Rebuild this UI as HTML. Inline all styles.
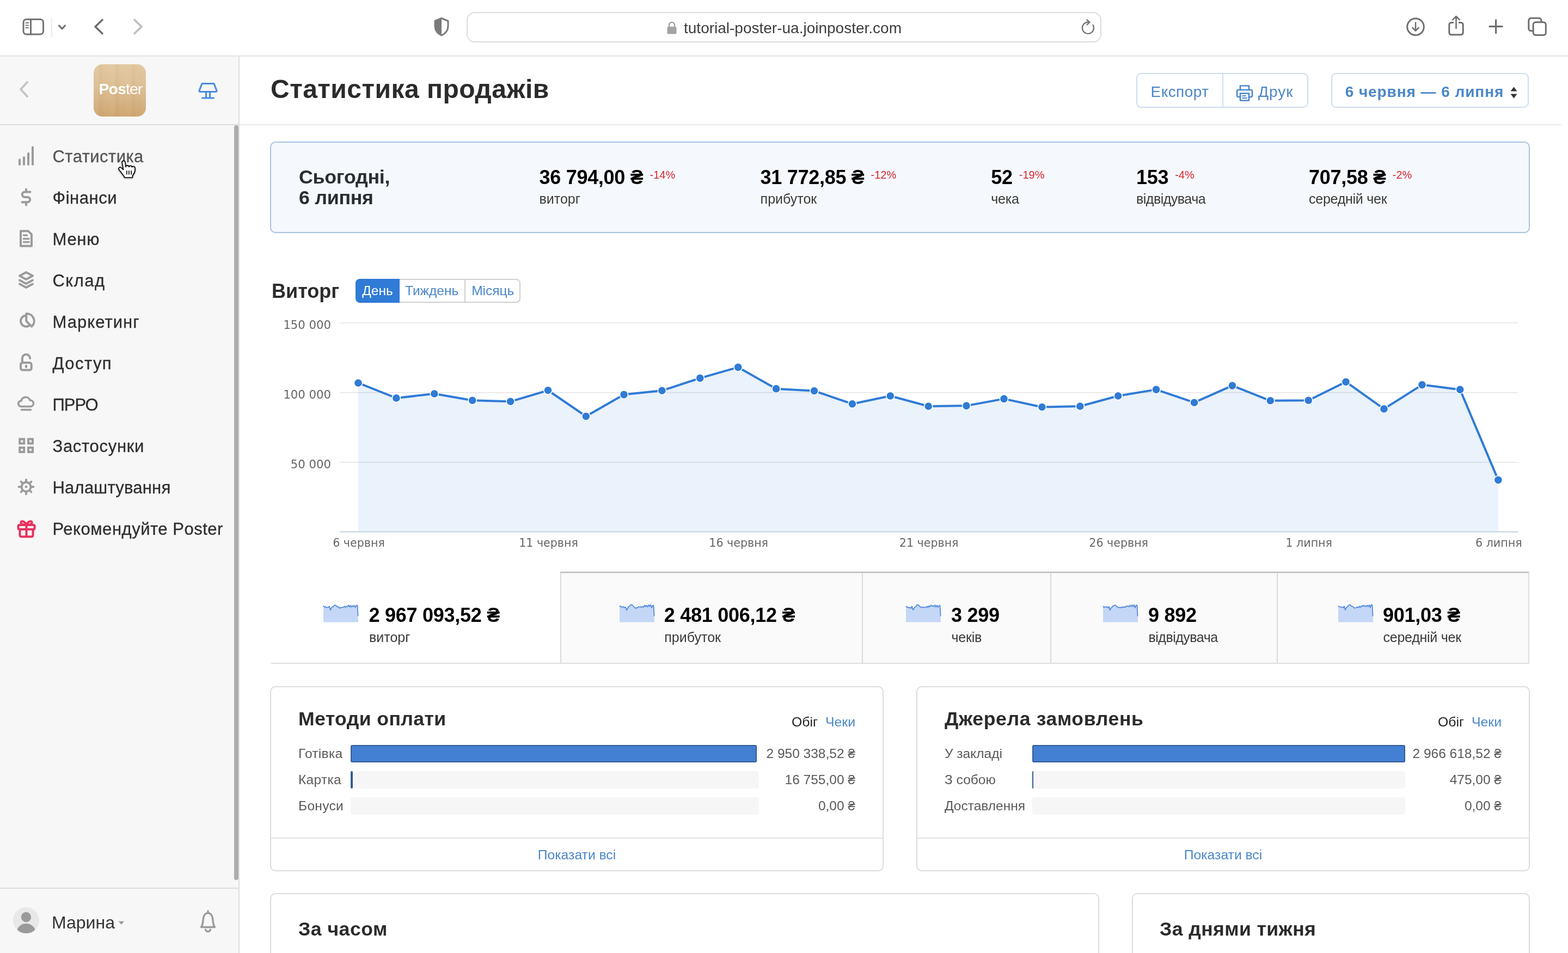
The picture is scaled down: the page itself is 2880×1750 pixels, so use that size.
<!DOCTYPE html>
<html lang="uk"><head><meta charset="utf-8"><title>Статистика продажів</title>
<style>
html,body{margin:0;padding:0;background:#fff;}
body{width:2880px;height:1750px;overflow:hidden;position:relative;font-family:"Liberation Sans",sans-serif;color:#333;}
div,svg{box-sizing:border-box;}
.abs{position:absolute;}
svg{position:absolute;overflow:visible;}
</style></head><body>
<div id="app" style="position:absolute;left:0;top:0;width:2880px;height:1750px;will-change:transform">

<div id="toolbar" class="abs" style="left:0;top:0;width:2880px;height:104px;background:#fff;"><div class="abs" style="left:0;top:102px;width:2880px;height:1px;background:#d7d7d7"></div><div class="abs" style="left:0;top:103px;width:2880px;height:1px;background:#ededed"></div>
<svg style="left:40px;top:32px" width="44" height="34" viewBox="0 0 44 34" fill="none" stroke="#737373" stroke-width="3" stroke-linecap="round">
<rect x="3" y="3.5" width="36.5" height="27.5" rx="5.5"/><line x1="16.5" y1="4" x2="16.5" y2="31"/>
<g stroke-width="2"><line x1="7.5" y1="10" x2="12" y2="10"/><line x1="7.5" y1="14.5" x2="12" y2="14.5"/><line x1="7.5" y1="19" x2="12" y2="19"/></g></svg>
<div class="abs" style="left:94px;top:32px;width:2px;height:36px;background:#ececec"></div>
<svg style="left:104px;top:42px" width="20" height="16" viewBox="0 0 20 16" fill="none" stroke="#737373" stroke-width="3.2" stroke-linecap="round" stroke-linejoin="round"><path d="M4.5 5 L10 10.8 L15.5 5"/></svg>
<svg style="left:168px;top:30px" width="28" height="38" viewBox="0 0 28 38" fill="none" stroke="#6e6e6e" stroke-width="3.6" stroke-linecap="round" stroke-linejoin="round"><path d="M20 6.5 L7 19 L20 31.5"/></svg>
<svg style="left:240px;top:30px" width="28" height="38" viewBox="0 0 28 38" fill="none" stroke="#bdbdbd" stroke-width="3.6" stroke-linecap="round" stroke-linejoin="round"><path d="M7 6.5 L20 19 L7 31.5"/></svg>
<svg style="left:794px;top:30px" width="34" height="38" viewBox="0 0 34 38"><path d="M17 3.5 L29 8.5 V18 C29 26 24 31.5 17 35 C10 31.5 5 26 5 18 V8.5 Z" fill="none" stroke="#7a7a7a" stroke-width="3" stroke-linejoin="round"/><path d="M17 3.5 L5 8.5 V18 C5 26 10 31.5 17 35 Z" fill="#7a7a7a"/></svg>
<div class="abs" style="left:857px;top:22px;width:1166px;height:56px;border:2px solid #dcdcdc;border-radius:15px;background:#fff"></div>
<svg style="left:1224px;top:38px" width="20" height="26" viewBox="0 0 20 26"><rect x="1.5" y="11" width="17" height="13.5" rx="2.5" fill="#a3a3a3"/><path d="M5 12 V8 a5 5 0 0 1 10 0 V12" fill="none" stroke="#a3a3a3" stroke-width="2.4"/></svg>
<div style="position:absolute;top:37.5px;font-size:28px;line-height:28px;font-weight:400;color:#3d3d3d;white-space:nowrap;left:1256px;">tutorial-poster-ua.joinposter.com</div>
<svg style="left:1984px;top:34px" width="30" height="32" viewBox="0 0 30 32" fill="none" stroke="#737373" stroke-width="2.4" stroke-linecap="round" stroke-linejoin="round"><path d="M23.5 12 A10.5 10.5 0 1 1 14 6.8"/><path d="M12.5 2.5 L17.5 6.8 L12.5 11.5"/></svg>
<svg style="left:2581px;top:30px" width="38" height="38" viewBox="0 0 38 38" fill="none" stroke="#6e6e6e" stroke-width="3" stroke-linecap="round" stroke-linejoin="round"><circle cx="19" cy="19.3" r="15.3"/><path d="M19 11.500 V26.300 M13.300 20.800 L19 26.500 L24.700 20.800" stroke-width="2.5"/></svg>
<svg style="left:2656px;top:26px" width="38" height="42" viewBox="0 0 38 42" fill="none" stroke="#6e6e6e" stroke-width="3" stroke-linecap="round" stroke-linejoin="round"><path d="M12.800 15.400 H9.500 a3.700 3.700 0 0 0 -3.700 3.700 V34 a3.700 3.700 0 0 0 3.700 3.700 H27.500 a3.700 3.700 0 0 0 3.700 -3.700 V19.100 a3.700 3.700 0 0 0 -3.700 -3.700 H24.200"/><path d="M18.500 26 V4.500 M12.200 10.300 L18.500 4 L24.800 10.300" stroke-width="2.5"/></svg>
<svg style="left:2732px;top:33px" width="32" height="32" viewBox="0 0 32 32" fill="none" stroke="#6e6e6e" stroke-width="3.2" stroke-linecap="round"><path d="M15.600 3.800 V27.600 M3.900 15.600 H27.300"/></svg>
<svg style="left:2804px;top:30px" width="40" height="38" viewBox="0 0 40 38" fill="none" stroke="#6e6e6e" stroke-width="3" stroke-linejoin="round"><path d="M12 26.800 H8.300 a4.500 4.500 0 0 1 -4.500 -4.500 V7.800 a4.500 4.500 0 0 1 4.500 -4.500 H22.500 a4.500 4.500 0 0 1 4.500 4.500 V10.800"/><rect x="12.100" y="10.800" width="23.200" height="23.600" rx="4.500"/></svg>
</div>
<div id="sidebar" class="abs" style="left:0;top:104px;width:440px;height:1646px;background:#f7f7f7;border-right:2px solid #dedede;">
</div>
<div class="abs" style="left:0;top:228px;width:438px;height:2px;background:#dedede"></div>
<svg style="left:30px;top:146px" width="28" height="36" viewBox="0 0 28 36" fill="none" stroke="#c4c4c4" stroke-width="4" stroke-linecap="round" stroke-linejoin="round"><path d="M20 5 L8 18 L20 31"/></svg>
<div class="abs" style="left:172px;top:118px;width:96px;height:96px;border-radius:16px;background:linear-gradient(180deg,#e2c8a0 0%,#dcbd92 45%,#cfa570 100%);overflow:hidden">
<div class="abs" style="left:0;top:0;width:96px;height:96px;background:repeating-linear-gradient(90deg,rgba(255,255,255,0.035) 0 9px,rgba(150,100,40,0.03) 9px 17px,rgba(255,255,255,0.015) 17px 30px)"></div>
<div class="abs" style="left:9.5px;top:27px;font-size:28.5px;line-height:36px;color:#fff;letter-spacing:-0.95px;white-space:nowrap"><b>Pos</b>ter</div></div>
<svg style="left:362px;top:150px" width="40" height="34" viewBox="0 0 40 34" fill="none" stroke="#4a8de0" stroke-width="3.2" stroke-linecap="round" stroke-linejoin="round"><path d="M9 3.5 H31 L36 16.5 a2 2 0 0 1 -2 2 H6 a2 2 0 0 1 -2 -2 Z"/><path d="M16.5 19 V29.5 M23.5 19 V29.5 M9.5 30 H30.5"/></svg>
<div class="abs" style="left:430px;top:230px;width:8px;height:1386px;border-radius:4px;background:#adadad"></div>
<div style="position:absolute;top:272.3px;font-size:31px;line-height:31px;font-weight:400;color:#555;white-space:nowrap;letter-spacing:0.45px;left:96.5px;-webkit-text-stroke:0.3px #555;">Статистика</div>
<div style="position:absolute;top:348.3px;font-size:31px;line-height:31px;font-weight:400;color:#2e2e2e;white-space:nowrap;letter-spacing:0.56px;left:96.5px;-webkit-text-stroke:0.3px #2e2e2e;">Фінанси</div>
<div style="position:absolute;top:424.3px;font-size:31px;line-height:31px;font-weight:400;color:#2e2e2e;white-space:nowrap;letter-spacing:0.73px;left:96.5px;-webkit-text-stroke:0.3px #2e2e2e;">Меню</div>
<div style="position:absolute;top:500.3px;font-size:31px;line-height:31px;font-weight:400;color:#2e2e2e;white-space:nowrap;letter-spacing:1.47px;left:96.5px;-webkit-text-stroke:0.3px #2e2e2e;">Склад</div>
<div style="position:absolute;top:576.3px;font-size:31px;line-height:31px;font-weight:400;color:#2e2e2e;white-space:nowrap;letter-spacing:1.04px;left:96.5px;-webkit-text-stroke:0.3px #2e2e2e;">Маркетинг</div>
<div style="position:absolute;top:652.3px;font-size:31px;line-height:31px;font-weight:400;color:#2e2e2e;white-space:nowrap;letter-spacing:1.44px;left:96.5px;-webkit-text-stroke:0.3px #2e2e2e;">Доступ</div>
<div style="position:absolute;top:728.3px;font-size:31px;line-height:31px;font-weight:400;color:#2e2e2e;white-space:nowrap;letter-spacing:-0.96px;left:96.5px;-webkit-text-stroke:0.3px #2e2e2e;">ПРРО</div>
<div style="position:absolute;top:804.3px;font-size:31px;line-height:31px;font-weight:400;color:#2e2e2e;white-space:nowrap;letter-spacing:0.7px;left:96.5px;-webkit-text-stroke:0.3px #2e2e2e;">Застосунки</div>
<div style="position:absolute;top:880.3px;font-size:31px;line-height:31px;font-weight:400;color:#2e2e2e;white-space:nowrap;letter-spacing:0.22px;left:96.5px;-webkit-text-stroke:0.3px #2e2e2e;">Налаштування</div>
<div style="position:absolute;top:956.3px;font-size:31px;line-height:31px;font-weight:400;color:#2e2e2e;white-space:nowrap;letter-spacing:0.52px;left:96.5px;-webkit-text-stroke:0.3px #2e2e2e;">Рекомендуйте Poster</div>
<svg style="left:30px;top:264px" width="36" height="44" viewBox="0 0 36 44" fill="#9b9b9b"><rect x="4" y="27.5" width="4" height="12.3" rx="1.5"/><rect x="12" y="23.3" width="4" height="16.5" rx="1.5"/><rect x="20" y="16" width="4" height="23.8" rx="1.5"/><rect x="28" y="4.5" width="4" height="35.3" rx="1.5"/></svg>
<svg style="left:34px;top:342px" width="28" height="40" viewBox="0 0 28 40" fill="none" stroke="#9b9b9b" stroke-width="4" stroke-linecap="round" stroke-linejoin="round"><path d="M21.5 10.5 H11.5 a4.7 4.7 0 0 0 0 9.4 H16.5 a4.7 4.7 0 0 1 0 9.4 H6.5"/><path d="M14 5.5 V9 M14 31 V34.5"/></svg>
<svg style="left:32px;top:418px" width="32" height="40" viewBox="0 0 32 40" fill="none" stroke="#9b9b9b" stroke-width="4" stroke-linejoin="round" stroke-linecap="round"><path d="M6 6.3 H20 L26 12.3 V33.8 H6 Z"/><path d="M11.5 14 H17.5 M11.5 20.5 H21 M11.5 26.5 H21" stroke-width="3.6"/></svg>
<svg style="left:30px;top:494px" width="36" height="40" viewBox="0 0 36 40" fill="none" stroke="#9b9b9b" stroke-width="4" stroke-linejoin="round" stroke-linecap="round"><path d="M18 6 L30 12.5 L18 19 L6 12.5 Z"/><path d="M6 20.5 L18 27 L30 20.5"/><path d="M6 27.5 L18 34 L30 27.5"/></svg>
<svg style="left:32px;top:570px" width="36" height="36" viewBox="0 0 36 36" fill="none" stroke="#9b9b9b" stroke-width="4" stroke-linejoin="round" stroke-linecap="round"><path d="M16 9.600 A10 10 0 1 0 22.800 27"/><path d="M16.300 19.600 V6 A13.600 13.600 0 0 1 26.300 29.600 Z"/></svg>
<svg style="left:32px;top:644px" width="32" height="40" viewBox="0 0 32 40" fill="none" stroke="#9b9b9b" stroke-width="4" stroke-linejoin="round" stroke-linecap="round"><rect x="6" y="22" width="19.7" height="13.5" rx="3.5"/><path d="M8.8 22 V14 a7.2 7.2 0 0 1 14.4 0"/><path d="M16 28 V29.5" stroke-width="4.4"/></svg>
<svg style="left:28px;top:724px" width="40" height="34" viewBox="0 0 40 34" fill="none" stroke="#9b9b9b" stroke-width="3.6" stroke-linejoin="round" stroke-linecap="round"><path d="M11 22.5 a5.2 5.2 0 0 1 0 -10.4 a8.3 8.3 0 0 1 16 -1.2 a5.9 5.9 0 0 1 2 11.6 Z"/><path d="M11.5 28.5 H28.5"/></svg>
<svg style="left:30px;top:800px" width="36" height="36" viewBox="0 0 36 36" fill="none" stroke="#9b9b9b" stroke-width="4"><rect x="6.2" y="6.3" width="8" height="8"/><rect x="22" y="6.3" width="8" height="8"/><rect x="6.2" y="22" width="8" height="8"/><rect x="22" y="22" width="8" height="8"/></svg>
<svg style="left:28px;top:874px" width="40" height="40" viewBox="0 0 40 40" fill="none" stroke="#9b9b9b" stroke-width="3.8" stroke-linecap="round"><circle cx="20" cy="20" r="8.5"/><line x1="20.00" y1="30.00" x2="20.00" y2="33.40"/><line x1="12.93" y1="27.07" x2="10.52" y2="29.48"/><line x1="10.00" y1="20.00" x2="6.60" y2="20.00"/><line x1="12.93" y1="12.93" x2="10.52" y2="10.52"/><line x1="20.00" y1="10.00" x2="20.00" y2="6.60"/><line x1="27.07" y1="12.93" x2="29.48" y2="10.52"/><line x1="30.00" y1="20.00" x2="33.40" y2="20.00"/><line x1="27.07" y1="27.07" x2="29.48" y2="29.48"/><circle cx="20" cy="20" r="1.6" fill="#9b9b9b" stroke-width="1.5"/></svg>
<svg style="left:28px;top:950px" width="42" height="42" viewBox="0 0 42 42" fill="none" stroke="#e8325f" stroke-width="4" stroke-linejoin="round" stroke-linecap="round"><rect x="5.6" y="14" width="30" height="8" rx="2"/><path d="M8.5 22 V33 a2.5 2.5 0 0 0 2.5 2.5 H30 a2.5 2.5 0 0 0 2.5 -2.5 V22"/><path d="M20.5 14 V35.5"/><path d="M20.5 13.5 C16 5 8 6 11 11.5 C12 13 15 13.5 20.5 13.5 C26 13.5 29 13 30 11.5 C33 6 25 5 20.5 13.5 Z"/></svg>
<div class="abs" style="left:0;top:1630px;width:438px;height:2px;background:#dcdcdc"></div>
<svg style="left:24px;top:1666px" width="48" height="48" viewBox="0 0 48 48"><defs><clipPath id="av"><circle cx="24" cy="24" r="24"/></clipPath></defs><circle cx="24" cy="24" r="24" fill="#e8e8e8"/><g clip-path="url(#av)" fill="#9a9a9a"><circle cx="24" cy="18" r="9.2"/><ellipse cx="24" cy="45" rx="17" ry="15"/></g></svg>
<div style="position:absolute;top:1677.8px;font-size:32px;line-height:32px;font-weight:400;color:#333;white-space:nowrap;left:95px;">Марина</div>
<svg style="left:217px;top:1691px" width="12" height="8" viewBox="0 0 12 8"><path d="M0.5 0.8 H11 L5.8 6.8 Z" fill="#9a9a9a"/></svg>
<svg style="left:364px;top:1668px" width="36" height="46" viewBox="0 0 36 46" fill="none" stroke="#9a9a9a" stroke-width="3.4" stroke-linecap="round" stroke-linejoin="round"><path d="M18 5 V8"/><path d="M5.5 34.5 C9 30 8.5 24 9.5 18 C10.5 12 14 8.5 18 8.5 C22 8.5 25.5 12 26.5 18 C27.5 24 27 30 30.5 34.5 Z"/><path d="M13.5 39 a4.6 4.6 0 0 0 9 0"/></svg>
<div id="main" class="abs" style="left:440px;top:104px;width:2440px;height:1646px;background:#fff"></div>
<div class="abs" style="left:440px;top:228px;width:2428px;height:2px;background:#ececec"></div>
<div style="position:absolute;top:140.4px;font-size:48px;line-height:48px;font-weight:700;color:#2b2b2b;white-space:nowrap;letter-spacing:0.48px;left:497px;">Статистика продажів</div>
<div class="abs" style="left:2087px;top:134px;width:316px;height:64px;border:2px solid #cddcf0;border-radius:9px;background:#fff"></div>
<div class="abs" style="left:2245px;top:135px;width:2px;height:62px;background:#cddcf0"></div>
<div style="position:absolute;top:155.3px;font-size:28px;line-height:28px;font-weight:400;color:#4a86c9;white-space:nowrap;letter-spacing:0.45px;left:2113.5px;">Експорт</div>
<svg style="left:2269px;top:154px" width="34" height="34" viewBox="0 0 34 34" fill="none" stroke="#4a86c9" stroke-width="2.6" stroke-linejoin="round" stroke-linecap="round"><path d="M9 11 V3.5 H25 V11"/><path d="M9 24 H5.5 a2.5 2.5 0 0 1 -2.500 -2.5 V13.500 a2.5 2.5 0 0 1 2.500 -2.5 H28.500 a2.5 2.5 0 0 1 2.500 2.5 V21.500 a2.5 2.5 0 0 1 -2.500 2.5 H25"/><rect x="9" y="17.500" width="16" height="13"/><path d="M13 22 H19 M13 26 H21" stroke-width="2"/></svg>
<div style="position:absolute;top:155.3px;font-size:28px;line-height:28px;font-weight:400;color:#4a86c9;white-space:nowrap;letter-spacing:1.0px;left:2311px;">Друк</div>
<div class="abs" style="left:2445px;top:134px;width:363px;height:64px;border:2px solid #cddcf0;border-radius:9px;background:#fff"></div>
<div style="position:absolute;top:155.3px;font-size:28px;line-height:28px;font-weight:700;color:#4a86c9;white-space:nowrap;letter-spacing:0.93px;left:2470.7px;">6 червня — 6 липня</div>
<svg style="left:2773px;top:158px" width="16" height="24" viewBox="0 0 16 24" fill="#333"><path d="M7.500 1.500 L13.500 9.500 H1.500 Z"/><path d="M7.500 22.500 L13.500 14.500 H1.500 Z"/></svg>
<div id="today" class="abs" style="left:496px;top:260px;width:2314px;height:168px;border:2px solid #a8c2e4;border-radius:10px;background:#f5f8fd"></div>
<div style="position:absolute;top:307.8px;font-size:35.8px;line-height:35.8px;font-weight:700;color:#2a2d33;white-space:nowrap;letter-spacing:-0.3px;left:549px;">Сьогодні,</div>
<div style="position:absolute;top:346.4px;font-size:35.8px;line-height:35.8px;font-weight:700;color:#2a2d33;white-space:nowrap;letter-spacing:-0.3px;left:549px;">6 липня</div>
<div style="position:absolute;top:308.0px;font-size:36px;line-height:36px;font-weight:700;color:#000;white-space:nowrap;letter-spacing:-0.29px;left:990.5px;">36 794,00 ₴<span style="font-weight:400;font-size:20px;color:#d9262c;position:relative;top:-10px;margin-left:12px;letter-spacing:0">-14%</span></div>
<div style="position:absolute;top:352.8px;font-size:25px;line-height:25px;font-weight:400;color:#3a3a3a;white-space:nowrap;left:990.5px;">виторг</div>
<div style="position:absolute;top:308.0px;font-size:36px;line-height:36px;font-weight:700;color:#000;white-space:nowrap;letter-spacing:-0.29px;left:1396.6px;">31 772,85 ₴<span style="font-weight:400;font-size:20px;color:#d9262c;position:relative;top:-10px;margin-left:12px;letter-spacing:0">-12%</span></div>
<div style="position:absolute;top:352.8px;font-size:25px;line-height:25px;font-weight:400;color:#3a3a3a;white-space:nowrap;left:1396.6px;">прибуток</div>
<div style="position:absolute;top:308.0px;font-size:36px;line-height:36px;font-weight:700;color:#000;white-space:nowrap;letter-spacing:-0.29px;left:1820.3px;">52<span style="font-weight:400;font-size:20px;color:#d9262c;position:relative;top:-10px;margin-left:12px;letter-spacing:0">-19%</span></div>
<div style="position:absolute;top:352.8px;font-size:25px;line-height:25px;font-weight:400;color:#3a3a3a;white-space:nowrap;letter-spacing:-0.2px;left:1820.3px;">чека</div>
<div style="position:absolute;top:308.0px;font-size:36px;line-height:36px;font-weight:700;color:#000;white-space:nowrap;letter-spacing:-0.29px;left:2087px;">153<span style="font-weight:400;font-size:20px;color:#d9262c;position:relative;top:-10px;margin-left:12px;letter-spacing:0">-4%</span></div>
<div style="position:absolute;top:352.8px;font-size:25px;line-height:25px;font-weight:400;color:#3a3a3a;white-space:nowrap;letter-spacing:-0.5px;left:2087px;">відвідувача</div>
<div style="position:absolute;top:308.0px;font-size:36px;line-height:36px;font-weight:700;color:#000;white-space:nowrap;letter-spacing:-0.29px;left:2404px;">707,58 ₴<span style="font-weight:400;font-size:20px;color:#d9262c;position:relative;top:-10px;margin-left:12px;letter-spacing:0">-2%</span></div>
<div style="position:absolute;top:352.8px;font-size:25px;line-height:25px;font-weight:400;color:#3a3a3a;white-space:nowrap;letter-spacing:-0.25px;left:2404px;">середній чек</div>
<div style="position:absolute;top:516.8px;font-size:36px;line-height:36px;font-weight:700;color:#2b2b2b;white-space:nowrap;left:499px;">Виторг</div>
<div class="abs" style="left:653px;top:512px;width:303px;height:44px;border:2px solid #d0d0d0;border-radius:8px;background:#fff"></div>
<div class="abs" style="left:653px;top:512px;width:81px;height:44px;border-radius:8px 0 0 8px;background:#2f7bd6"></div>
<div class="abs" style="left:853px;top:514px;width:2px;height:40px;background:#d0d0d0"></div>
<div style="position:absolute;top:522.2px;font-size:24.5px;line-height:24.5px;font-weight:400;color:#fff;white-space:nowrap;left:665.2px;">День</div>
<div style="position:absolute;top:522.2px;font-size:24.5px;line-height:24.5px;font-weight:400;color:#4a86c9;white-space:nowrap;left:744px;">Тиждень</div>
<div style="position:absolute;top:522.2px;font-size:24.5px;line-height:24.5px;font-weight:400;color:#4a86c9;white-space:nowrap;left:866.2px;">Місяць</div>
<svg id="chart" style="left:480px;top:560px" width="2360" height="470" viewBox="0 0 2360 470"><rect x="144" y="31.8" width="2164" height="2" fill="#e9e9e9"/><rect x="144" y="159.9" width="2164" height="2" fill="#e9e9e9"/><rect x="144" y="287.9" width="2164" height="2" fill="#e9e9e9"/><path d="M178.0,143.2 L247.9,171.0 L317.8,163.0 L387.7,175.3 L457.6,177.3 L526.5,156.8 L596.3,204.5 L666.0,164.6 L735.9,157.3 L805.8,134.4 L875.7,114.4 L945.6,153.9 L1015.5,157.8 L1085.4,181.7 L1155.3,167.0 L1225.2,186.0 L1295.0,185.1 L1364.0,172.4 L1433.9,187.5 L1503.8,186.0 L1573.7,167.0 L1643.6,155.4 L1713.5,179.2 L1783.4,148.1 L1853.3,175.8 L1923.2,175.3 L1992.0,141.2 L2062.0,190.9 L2132.0,146.6 L2201.7,155.4 L2271.8,321.4 L2271.8,416.6 L178.0,416.6 Z" fill="#2f7bd6" fill-opacity="0.1"/><rect x="144" y="415.6" width="2164" height="2" fill="#c2d2e6"/><path d="M178.0,143.2 L247.9,171.0 L317.8,163.0 L387.7,175.3 L457.6,177.3 L526.5,156.8 L596.3,204.5 L666.0,164.6 L735.9,157.3 L805.8,134.4 L875.7,114.4 L945.6,153.9 L1015.5,157.8 L1085.4,181.7 L1155.3,167.0 L1225.2,186.0 L1295.0,185.1 L1364.0,172.4 L1433.9,187.5 L1503.8,186.0 L1573.7,167.0 L1643.6,155.4 L1713.5,179.2 L1783.4,148.1 L1853.3,175.8 L1923.2,175.3 L1992.0,141.2 L2062.0,190.9 L2132.0,146.6 L2201.7,155.4 L2271.8,321.4" fill="none" stroke="#2f7bd6" stroke-width="4" stroke-linejoin="round" stroke-linecap="round"/><circle cx="178.0" cy="143.2" r="7.6" fill="#2f7bd6" stroke="#fff" stroke-width="1.6"/><circle cx="247.9" cy="171.0" r="7.6" fill="#2f7bd6" stroke="#fff" stroke-width="1.6"/><circle cx="317.8" cy="163.0" r="7.6" fill="#2f7bd6" stroke="#fff" stroke-width="1.6"/><circle cx="387.7" cy="175.3" r="7.6" fill="#2f7bd6" stroke="#fff" stroke-width="1.6"/><circle cx="457.6" cy="177.3" r="7.6" fill="#2f7bd6" stroke="#fff" stroke-width="1.6"/><circle cx="526.5" cy="156.8" r="7.6" fill="#2f7bd6" stroke="#fff" stroke-width="1.6"/><circle cx="596.3" cy="204.5" r="7.6" fill="#2f7bd6" stroke="#fff" stroke-width="1.6"/><circle cx="666.0" cy="164.6" r="7.6" fill="#2f7bd6" stroke="#fff" stroke-width="1.6"/><circle cx="735.9" cy="157.3" r="7.6" fill="#2f7bd6" stroke="#fff" stroke-width="1.6"/><circle cx="805.8" cy="134.4" r="7.6" fill="#2f7bd6" stroke="#fff" stroke-width="1.6"/><circle cx="875.7" cy="114.4" r="7.6" fill="#2f7bd6" stroke="#fff" stroke-width="1.6"/><circle cx="945.6" cy="153.9" r="7.6" fill="#2f7bd6" stroke="#fff" stroke-width="1.6"/><circle cx="1015.5" cy="157.8" r="7.6" fill="#2f7bd6" stroke="#fff" stroke-width="1.6"/><circle cx="1085.4" cy="181.7" r="7.6" fill="#2f7bd6" stroke="#fff" stroke-width="1.6"/><circle cx="1155.3" cy="167.0" r="7.6" fill="#2f7bd6" stroke="#fff" stroke-width="1.6"/><circle cx="1225.2" cy="186.0" r="7.6" fill="#2f7bd6" stroke="#fff" stroke-width="1.6"/><circle cx="1295.0" cy="185.1" r="7.6" fill="#2f7bd6" stroke="#fff" stroke-width="1.6"/><circle cx="1364.0" cy="172.4" r="7.6" fill="#2f7bd6" stroke="#fff" stroke-width="1.6"/><circle cx="1433.9" cy="187.5" r="7.6" fill="#2f7bd6" stroke="#fff" stroke-width="1.6"/><circle cx="1503.8" cy="186.0" r="7.6" fill="#2f7bd6" stroke="#fff" stroke-width="1.6"/><circle cx="1573.7" cy="167.0" r="7.6" fill="#2f7bd6" stroke="#fff" stroke-width="1.6"/><circle cx="1643.6" cy="155.4" r="7.6" fill="#2f7bd6" stroke="#fff" stroke-width="1.6"/><circle cx="1713.5" cy="179.2" r="7.6" fill="#2f7bd6" stroke="#fff" stroke-width="1.6"/><circle cx="1783.4" cy="148.1" r="7.6" fill="#2f7bd6" stroke="#fff" stroke-width="1.6"/><circle cx="1853.3" cy="175.8" r="7.6" fill="#2f7bd6" stroke="#fff" stroke-width="1.6"/><circle cx="1923.2" cy="175.3" r="7.6" fill="#2f7bd6" stroke="#fff" stroke-width="1.6"/><circle cx="1992.0" cy="141.2" r="7.6" fill="#2f7bd6" stroke="#fff" stroke-width="1.6"/><circle cx="2062.0" cy="190.9" r="7.6" fill="#2f7bd6" stroke="#fff" stroke-width="1.6"/><circle cx="2132.0" cy="146.6" r="7.6" fill="#2f7bd6" stroke="#fff" stroke-width="1.6"/><circle cx="2201.7" cy="155.4" r="7.6" fill="#2f7bd6" stroke="#fff" stroke-width="1.6"/><circle cx="2271.8" cy="321.4" r="7.6" fill="#2f7bd6" stroke="#fff" stroke-width="1.6"/><text x="128.0" y="44.1" text-anchor="end" font-family="DejaVu Sans, sans-serif" font-size="21.2" fill="#666">150 000</text><text x="128.0" y="172.2" text-anchor="end" font-family="DejaVu Sans, sans-serif" font-size="21.2" fill="#666">100 000</text><text x="128.0" y="300.2" text-anchor="end" font-family="DejaVu Sans, sans-serif" font-size="21.2" fill="#666">50 000</text><text x="179.0" y="443.7" text-anchor="middle" font-family="DejaVu Sans, sans-serif" font-size="20.6" fill="#666">6 червня</text><text x="527.5" y="443.7" text-anchor="middle" font-family="DejaVu Sans, sans-serif" font-size="20.6" fill="#666">11 червня</text><text x="876.7" y="443.7" text-anchor="middle" font-family="DejaVu Sans, sans-serif" font-size="20.6" fill="#666">16 червня</text><text x="1226.2" y="443.7" text-anchor="middle" font-family="DejaVu Sans, sans-serif" font-size="20.6" fill="#666">21 червня</text><text x="1574.7" y="443.7" text-anchor="middle" font-family="DejaVu Sans, sans-serif" font-size="20.6" fill="#666">26 червня</text><text x="1924.2" y="443.7" text-anchor="middle" font-family="DejaVu Sans, sans-serif" font-size="20.6" fill="#666">1 липня</text><text x="2272.8" y="443.7" text-anchor="middle" font-family="DejaVu Sans, sans-serif" font-size="20.6" fill="#666">6 липня</text></svg>
<div class="abs" style="left:1029px;top:1050px;width:1780px;height:169px;background:#fafafa;border-top:1px solid #9c9c9c;border-bottom:2px solid #dedede;border-right:2px solid #dedede;box-shadow:inset 0 2px 2px -1px rgba(0,0,0,0.22)"></div>
<div class="abs" style="left:497px;top:1217px;width:534px;height:2px;background:#dedede;border-radius:0 0 0 6px"></div>
<div class="abs" style="left:1029px;top:1052px;width:2px;height:166px;background:#d9d9d9"></div>
<div class="abs" style="left:1583px;top:1052px;width:2px;height:166px;background:#d9d9d9"></div>
<div class="abs" style="left:1929px;top:1052px;width:2px;height:166px;background:#d9d9d9"></div>
<div class="abs" style="left:2345px;top:1052px;width:2px;height:166px;background:#d9d9d9"></div>
<svg style="left:594px;top:1108.5px" width="64" height="34" viewBox="0 0 64 34"><path d="M0.0,3.0 L1.8,5.9 L3.7,5.0 L5.5,6.7 L7.4,6.2 L9.2,6.4 L11.0,4.1 L12.9,11.6 L14.7,7.1 L16.5,5.0 L18.4,4.9 L20.2,2.1 L22.1,2.4 L23.9,3.5 L25.7,5.3 L27.6,5.2 L29.4,7.7 L31.2,6.9 L33.1,6.8 L34.9,6.0 L36.8,6.3 L38.6,4.2 L40.4,6.3 L42.3,4.4 L44.1,4.8 L46.0,2.2 L47.8,5.5 L49.6,2.6 L51.5,5.8 L53.3,3.1 L55.1,5.0 L57.0,2.8 L58.8,6.3 L60.7,2.7 L62.5,2.7 L63.6,22.5 L64,33.5 L0,33.5 Z" fill="#c4d7f6"/><path d="M0.0,3.0 L1.8,5.9 L3.7,5.0 L5.5,6.7 L7.4,6.2 L9.2,6.4 L11.0,4.1 L12.9,11.6 L14.7,7.1 L16.5,5.0 L18.4,4.9 L20.2,2.1 L22.1,2.4 L23.9,3.5 L25.7,5.3 L27.6,5.2 L29.4,7.7 L31.2,6.9 L33.1,6.8 L34.9,6.0 L36.8,6.3 L38.6,4.2 L40.4,6.3 L42.3,4.4 L44.1,4.8 L46.0,2.2 L47.8,5.5 L49.6,2.6 L51.5,5.8 L53.3,3.1 L55.1,5.0 L57.0,2.8 L58.8,6.3 L60.7,2.7 L62.5,2.7 L63.6,22.5" fill="none" stroke="#4f86dd" stroke-width="1.7" stroke-linejoin="round"/></svg>
<div style="position:absolute;top:1112.3px;font-size:36px;line-height:36px;font-weight:700;color:#000;white-space:nowrap;letter-spacing:-0.27px;left:677.5px;">2 967 093,52 ₴</div>
<div style="position:absolute;top:1157.8px;font-size:25px;line-height:25px;font-weight:400;color:#3a3a3a;white-space:nowrap;left:678.0px;">виторг</div>
<svg style="left:1138px;top:1108.5px" width="64" height="34" viewBox="0 0 64 34"><path d="M0.0,3.0 L1.8,5.1 L3.7,5.0 L5.5,5.9 L7.4,5.2 L9.2,7.0 L11.0,5.8 L12.9,11.5 L14.7,8.0 L16.5,5.0 L18.4,4.1 L20.2,1.8 L22.1,1.2 L23.9,2.8 L25.7,4.5 L27.6,6.6 L29.4,8.1 L31.2,6.8 L33.1,7.3 L34.9,5.0 L36.8,5.7 L38.6,5.2 L40.4,6.2 L42.3,4.8 L44.1,5.9 L46.0,2.3 L47.8,5.0 L49.6,2.9 L51.5,5.4 L53.3,1.8 L55.1,4.6 L57.0,1.3 L58.8,7.3 L60.7,2.9 L62.5,2.9 L63.6,22.5 L64,33.5 L0,33.5 Z" fill="#c4d7f6"/><path d="M0.0,3.0 L1.8,5.1 L3.7,5.0 L5.5,5.9 L7.4,5.2 L9.2,7.0 L11.0,5.8 L12.9,11.5 L14.7,8.0 L16.5,5.0 L18.4,4.1 L20.2,1.8 L22.1,1.2 L23.9,2.8 L25.7,4.5 L27.6,6.6 L29.4,8.1 L31.2,6.8 L33.1,7.3 L34.9,5.0 L36.8,5.7 L38.6,5.2 L40.4,6.2 L42.3,4.8 L44.1,5.9 L46.0,2.3 L47.8,5.0 L49.6,2.9 L51.5,5.4 L53.3,1.8 L55.1,4.6 L57.0,1.3 L58.8,7.3 L60.7,2.9 L62.5,2.9 L63.6,22.5" fill="none" stroke="#4f86dd" stroke-width="1.7" stroke-linejoin="round"/></svg>
<div style="position:absolute;top:1112.3px;font-size:36px;line-height:36px;font-weight:700;color:#000;white-space:nowrap;letter-spacing:-0.27px;left:1219.8px;">2 481 006,12 ₴</div>
<div style="position:absolute;top:1157.8px;font-size:25px;line-height:25px;font-weight:400;color:#3a3a3a;white-space:nowrap;left:1220.3px;">прибуток</div>
<svg style="left:1664px;top:1108.5px" width="64" height="34" viewBox="0 0 64 34"><path d="M0.0,3.7 L1.8,6.2 L3.7,5.7 L5.5,7.3 L7.4,6.4 L9.2,8.0 L11.0,4.2 L12.9,10.9 L14.7,8.3 L16.5,5.8 L18.4,4.7 L20.2,1.5 L22.1,1.7 L23.9,3.0 L25.7,5.1 L27.6,5.9 L29.4,6.6 L31.2,5.7 L33.1,6.4 L34.9,6.3 L36.8,6.5 L38.6,4.4 L40.4,6.3 L42.3,3.5 L44.1,5.4 L46.0,2.3 L47.8,3.9 L49.6,3.3 L51.5,4.9 L53.3,1.9 L55.1,5.5 L57.0,2.7 L58.8,6.1 L60.7,3.0 L62.5,2.9 L63.6,22.5 L64,33.5 L0,33.5 Z" fill="#c4d7f6"/><path d="M0.0,3.7 L1.8,6.2 L3.7,5.7 L5.5,7.3 L7.4,6.4 L9.2,8.0 L11.0,4.2 L12.9,10.9 L14.7,8.3 L16.5,5.8 L18.4,4.7 L20.2,1.5 L22.1,1.7 L23.9,3.0 L25.7,5.1 L27.6,5.9 L29.4,6.6 L31.2,5.7 L33.1,6.4 L34.9,6.3 L36.8,6.5 L38.6,4.4 L40.4,6.3 L42.3,3.5 L44.1,5.4 L46.0,2.3 L47.8,3.9 L49.6,3.3 L51.5,4.9 L53.3,1.9 L55.1,5.5 L57.0,2.7 L58.8,6.1 L60.7,3.0 L62.5,2.9 L63.6,22.5" fill="none" stroke="#4f86dd" stroke-width="1.7" stroke-linejoin="round"/></svg>
<div style="position:absolute;top:1112.3px;font-size:36px;line-height:36px;font-weight:700;color:#000;white-space:nowrap;letter-spacing:-0.27px;left:1747px;">3 299</div>
<div style="position:absolute;top:1157.8px;font-size:25px;line-height:25px;font-weight:400;color:#3a3a3a;white-space:nowrap;letter-spacing:-0.2px;left:1747.5px;">чеків</div>
<svg style="left:2026px;top:1108.5px" width="64" height="34" viewBox="0 0 64 34"><path d="M0.0,4.0 L1.8,6.4 L3.7,5.2 L5.5,6.1 L7.4,5.1 L9.2,7.5 L11.0,4.9 L12.9,11.5 L14.7,7.3 L16.5,6.0 L18.4,3.6 L20.2,2.7 L22.1,2.2 L23.9,3.3 L25.7,5.1 L27.6,6.1 L29.4,6.9 L31.2,6.3 L33.1,7.3 L34.9,5.2 L36.8,6.5 L38.6,5.3 L40.4,6.4 L42.3,3.9 L44.1,4.5 L46.0,3.5 L47.8,5.3 L49.6,2.5 L51.5,4.7 L53.3,1.9 L55.1,4.8 L57.0,1.6 L58.8,7.3 L60.7,2.4 L62.5,2.3 L63.6,22.5 L64,33.5 L0,33.5 Z" fill="#c4d7f6"/><path d="M0.0,4.0 L1.8,6.4 L3.7,5.2 L5.5,6.1 L7.4,5.1 L9.2,7.5 L11.0,4.9 L12.9,11.5 L14.7,7.3 L16.5,6.0 L18.4,3.6 L20.2,2.7 L22.1,2.2 L23.9,3.3 L25.7,5.1 L27.6,6.1 L29.4,6.9 L31.2,6.3 L33.1,7.3 L34.9,5.2 L36.8,6.5 L38.6,5.3 L40.4,6.4 L42.3,3.9 L44.1,4.5 L46.0,3.5 L47.8,5.3 L49.6,2.5 L51.5,4.7 L53.3,1.9 L55.1,4.8 L57.0,1.6 L58.8,7.3 L60.7,2.4 L62.5,2.3 L63.6,22.5" fill="none" stroke="#4f86dd" stroke-width="1.7" stroke-linejoin="round"/></svg>
<div style="position:absolute;top:1112.3px;font-size:36px;line-height:36px;font-weight:700;color:#000;white-space:nowrap;letter-spacing:-0.27px;left:2109px;">9 892</div>
<div style="position:absolute;top:1157.8px;font-size:25px;line-height:25px;font-weight:400;color:#3a3a3a;white-space:nowrap;letter-spacing:-0.5px;left:2109.5px;">відвідувача</div>
<svg style="left:2458px;top:1108.5px" width="64" height="34" viewBox="0 0 64 34"><path d="M0.0,3.2 L1.8,5.2 L3.7,5.5 L5.5,5.7 L7.4,6.1 L9.2,7.0 L11.0,4.2 L12.9,11.0 L14.7,6.7 L16.5,5.4 L18.4,3.2 L20.2,1.5 L22.1,1.7 L23.9,4.1 L25.7,4.3 L27.6,5.3 L29.4,7.7 L31.2,7.0 L33.1,6.9 L34.9,5.4 L36.8,6.9 L38.6,4.2 L40.4,6.4 L42.3,3.8 L44.1,4.6 L46.0,2.3 L47.8,4.5 L49.6,3.2 L51.5,4.8 L53.3,2.5 L55.1,4.9 L57.0,1.8 L58.8,6.6 L60.7,1.4 L62.5,2.0 L63.6,22.5 L64,33.5 L0,33.5 Z" fill="#c4d7f6"/><path d="M0.0,3.2 L1.8,5.2 L3.7,5.5 L5.5,5.7 L7.4,6.1 L9.2,7.0 L11.0,4.2 L12.9,11.0 L14.7,6.7 L16.5,5.4 L18.4,3.2 L20.2,1.5 L22.1,1.7 L23.9,4.1 L25.7,4.3 L27.6,5.3 L29.4,7.7 L31.2,7.0 L33.1,6.9 L34.9,5.4 L36.8,6.9 L38.6,4.2 L40.4,6.4 L42.3,3.8 L44.1,4.6 L46.0,2.3 L47.8,4.5 L49.6,3.2 L51.5,4.8 L53.3,2.5 L55.1,4.9 L57.0,1.8 L58.8,6.6 L60.7,1.4 L62.5,2.0 L63.6,22.5" fill="none" stroke="#4f86dd" stroke-width="1.7" stroke-linejoin="round"/></svg>
<div style="position:absolute;top:1112.3px;font-size:36px;line-height:36px;font-weight:700;color:#000;white-space:nowrap;letter-spacing:-0.27px;left:2540px;">901,03 ₴</div>
<div style="position:absolute;top:1157.8px;font-size:25px;line-height:25px;font-weight:400;color:#3a3a3a;white-space:nowrap;letter-spacing:-0.25px;left:2540.5px;">середній чек</div>
<div class="abs" style="left:496px;top:1260px;width:1127px;height:340px;border:2px solid #dcdcdc;border-radius:10px;background:#fff"></div>
<div class="abs" style="left:498px;top:1538px;width:1123px;height:2px;background:#e2e2e2"></div>
<div style="position:absolute;top:1303.2px;font-size:35.6px;line-height:35.6px;font-weight:700;color:#2b2b2b;white-space:nowrap;letter-spacing:0.4px;left:548px;">Методи оплати</div>
<div style="position:absolute;top:1313.5px;font-size:24.8px;line-height:24.8px;font-weight:400;color:#333;white-space:nowrap;right:1309px;"><span style="color:#222">Обіг</span><span style="margin-left:14px;color:#4a86c9">Чеки</span></div>
<div style="position:absolute;top:1372.4px;font-size:24.5px;line-height:24.5px;font-weight:400;color:#595959;white-space:nowrap;letter-spacing:0.3px;left:548px;">Готівка</div>
<div class="abs" style="left:644px;top:1368px;width:750px;height:32px;border-radius:4px;background:#f6f6f6"></div>
<div class="abs" style="left:644px;top:1368px;width:746px;height:32px;border-radius:3px;background:#437fd2;border:2px solid #355b92"></div>
<div style="position:absolute;top:1372.4px;font-size:24.5px;line-height:24.5px;font-weight:400;color:#595959;white-space:nowrap;right:1309px;">2 950 338,52 ₴</div>
<div style="position:absolute;top:1420.4px;font-size:24.5px;line-height:24.5px;font-weight:400;color:#595959;white-space:nowrap;letter-spacing:0.3px;left:548px;">Картка</div>
<div class="abs" style="left:644px;top:1416px;width:750px;height:32px;border-radius:4px;background:#f6f6f6"></div>
<div class="abs" style="left:644px;top:1416px;width:4px;height:32px;border-radius:3px;background:#437fd2;border:2px solid #355b92"></div>
<div style="position:absolute;top:1420.4px;font-size:24.5px;line-height:24.5px;font-weight:400;color:#595959;white-space:nowrap;right:1309px;">16 755,00 ₴</div>
<div style="position:absolute;top:1468.4px;font-size:24.5px;line-height:24.5px;font-weight:400;color:#595959;white-space:nowrap;letter-spacing:0.3px;left:548px;">Бонуси</div>
<div class="abs" style="left:644px;top:1464px;width:750px;height:32px;border-radius:4px;background:#f6f6f6"></div>
<div style="position:absolute;top:1468.4px;font-size:24.5px;line-height:24.5px;font-weight:400;color:#595959;white-space:nowrap;right:1309px;">0,00 ₴</div>
<div style="position:absolute;top:1558.1px;font-size:24.7px;line-height:24.7px;font-weight:400;color:#4a86c9;white-space:nowrap;left:459.5px;width:1200px;text-align:center;">Показати всі</div>
<div class="abs" style="left:1683px;top:1260px;width:1127px;height:340px;border:2px solid #dcdcdc;border-radius:10px;background:#fff"></div>
<div class="abs" style="left:1685px;top:1538px;width:1123px;height:2px;background:#e2e2e2"></div>
<div style="position:absolute;top:1303.2px;font-size:35.6px;line-height:35.6px;font-weight:700;color:#2b2b2b;white-space:nowrap;letter-spacing:0.62px;left:1735px;">Джерела замовлень</div>
<div style="position:absolute;top:1313.5px;font-size:24.8px;line-height:24.8px;font-weight:400;color:#333;white-space:nowrap;right:122px;"><span style="color:#222">Обіг</span><span style="margin-left:14px;color:#4a86c9">Чеки</span></div>
<div style="position:absolute;top:1372.4px;font-size:24.5px;line-height:24.5px;font-weight:400;color:#595959;white-space:nowrap;left:1735px;">У закладі</div>
<div class="abs" style="left:1896px;top:1368px;width:685px;height:32px;border-radius:4px;background:#f6f6f6"></div>
<div class="abs" style="left:1896px;top:1368px;width:685px;height:32px;border-radius:3px;background:#437fd2;border:2px solid #355b92"></div>
<div style="position:absolute;top:1372.4px;font-size:24.5px;line-height:24.5px;font-weight:400;color:#595959;white-space:nowrap;right:122px;">2 966 618,52 ₴</div>
<div style="position:absolute;top:1420.4px;font-size:24.5px;line-height:24.5px;font-weight:400;color:#595959;white-space:nowrap;left:1735px;">З собою</div>
<div class="abs" style="left:1896px;top:1416px;width:685px;height:32px;border-radius:4px;background:#f6f6f6"></div>
<div class="abs" style="left:1896px;top:1416px;width:2px;height:32px;border-radius:3px;background:#437fd2;border:1px solid #355b92"></div>
<div style="position:absolute;top:1420.4px;font-size:24.5px;line-height:24.5px;font-weight:400;color:#595959;white-space:nowrap;right:122px;">475,00 ₴</div>
<div style="position:absolute;top:1468.4px;font-size:24.5px;line-height:24.5px;font-weight:400;color:#595959;white-space:nowrap;left:1735px;">Доставлення</div>
<div class="abs" style="left:1896px;top:1464px;width:685px;height:32px;border-radius:4px;background:#f6f6f6"></div>
<div style="position:absolute;top:1468.4px;font-size:24.5px;line-height:24.5px;font-weight:400;color:#595959;white-space:nowrap;right:122px;">0,00 ₴</div>
<div style="position:absolute;top:1558.1px;font-size:24.7px;line-height:24.7px;font-weight:400;color:#4a86c9;white-space:nowrap;left:1646.5px;width:1200px;text-align:center;">Показати всі</div>
<div class="abs" style="left:496px;top:1640px;width:1523px;height:200px;border:2px solid #dcdcdc;border-radius:10px;background:#fff"></div>
<div style="position:absolute;top:1689.2px;font-size:35.6px;line-height:35.6px;font-weight:700;color:#2b2b2b;white-space:nowrap;letter-spacing:0.5px;left:548px;">За часом</div>
<div class="abs" style="left:2079px;top:1640px;width:731px;height:200px;border:2px solid #dcdcdc;border-radius:10px;background:#fff"></div>
<div style="position:absolute;top:1689.2px;font-size:35.6px;line-height:35.6px;font-weight:700;color:#2b2b2b;white-space:nowrap;letter-spacing:0.4px;left:2130px;">За днями тижня</div>
<svg id="cursor" style="left:214px;top:292px;filter:drop-shadow(0 1.5px 1.5px rgba(0,0,0,0.45))" width="38" height="40" viewBox="0 0 38 40"><path d="M12.500 19.700 L10.200 6.500 Q9.900 3.400 12.900 3.400 Q15.700 3.400 16.100 6.500 L17 14.500 C17.500 11 22.500 11 23 14.500 C23.500 11.500 28 11.500 28.500 15 C29 13 33.500 13 34 16.500 L34 20.500 C34 25 31 28 29.700 30 L29.300 34 L15 34 C13 30 8 24 4.500 19.500 C3 17 5.500 14.500 8 15.500 Z" fill="#fff" stroke="#000" stroke-width="1.7" stroke-linejoin="round"/><path d="M18.900 21.300 V28.500 M22.900 21.300 V28.500 M27.100 21.300 V28.500" stroke="#000" stroke-width="1.600"/></svg>
</div>
</body></html>
